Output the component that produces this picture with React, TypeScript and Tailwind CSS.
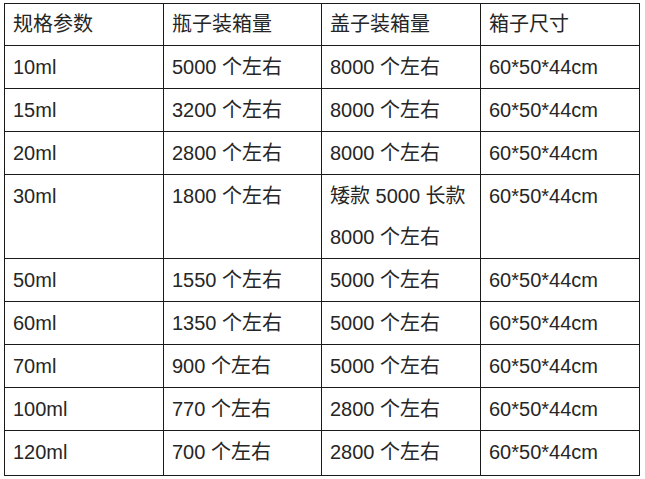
const rows: { spec: string; bottle: string; cap: React.ReactNode; box: string; h: string }[] = [
  { spec: '10ml', bottle: '5000 个左右', cap: '8000 个左右', box: '60*50*44cm', h: 'h-[43px]' },
  { spec: '15ml', bottle: '3200 个左右', cap: '8000 个左右', box: '60*50*44cm', h: 'h-[43px]' },
  { spec: '20ml', bottle: '2800 个左右', cap: '8000 个左右', box: '60*50*44cm', h: 'h-[43px]' },
  {
    spec: '30ml',
    bottle: '1800 个左右',
    cap: (
      <>
        矮款 5000 长款
        <br />
        8000 个左右
      </>
    ),
    box: '60*50*44cm',
    h: 'h-[84px]',
  },
  { spec: '50ml', bottle: '1550 个左右', cap: '5000 个左右', box: '60*50*44cm', h: 'h-[42px]' },
  { spec: '60ml', bottle: '1350 个左右', cap: '5000 个左右', box: '60*50*44cm', h: 'h-[43px]' },
  { spec: '70ml', bottle: '900 个左右', cap: '5000 个左右', box: '60*50*44cm', h: 'h-[42px]' },
  { spec: '100ml', bottle: '770 个左右', cap: '2800 个左右', box: '60*50*44cm', h: 'h-[42px]' },
  { spec: '120ml', bottle: '700 个左右', cap: '2800 个左右', box: '60*50*44cm', h: 'h-[45px]' },
];

const cell = 'border border-[#1a1a1a] px-2 leading-[41px]';

export default function App() {
  return (
    <div
      className="w-[645px] h-[479px] bg-white pt-[3px] pl-[4px] text-[20px] text-[#262626]"
      style={{ fontFamily: '"Liberation Sans", "Noto Sans CJK SC", sans-serif' }}
    >
      <table className="table-fixed border-collapse w-[636px]">
        <colgroup>
          <col className="w-[159px]" />
          <col className="w-[158px]" />
          <col className="w-[159px]" />
          <col className="w-[159px]" />
        </colgroup>
        <thead>
          <tr className="h-[42px] text-left">
            <th className={`${cell} font-normal align-middle`}>规格参数</th>
            <th className={`${cell} font-normal align-middle`}>瓶子装箱量</th>
            <th className={`${cell} font-normal align-middle`}>盖子装箱量</th>
            <th className={`${cell} font-normal align-middle`}>箱子尺寸</th>
          </tr>
        </thead>
        <tbody>
          {rows.map((r) => (
            <tr key={r.spec} className={r.h}>
              <td className={`${cell} align-top pt-px`}>{r.spec}</td>
              <td className={`${cell} align-top pt-px`}>{r.bottle}</td>
              <td className={`${cell} align-top pt-px`}>{r.cap}</td>
              <td className={`${cell} align-top pt-px`}>{r.box}</td>
            </tr>
          ))}
        </tbody>
      </table>
    </div>
  );
}
